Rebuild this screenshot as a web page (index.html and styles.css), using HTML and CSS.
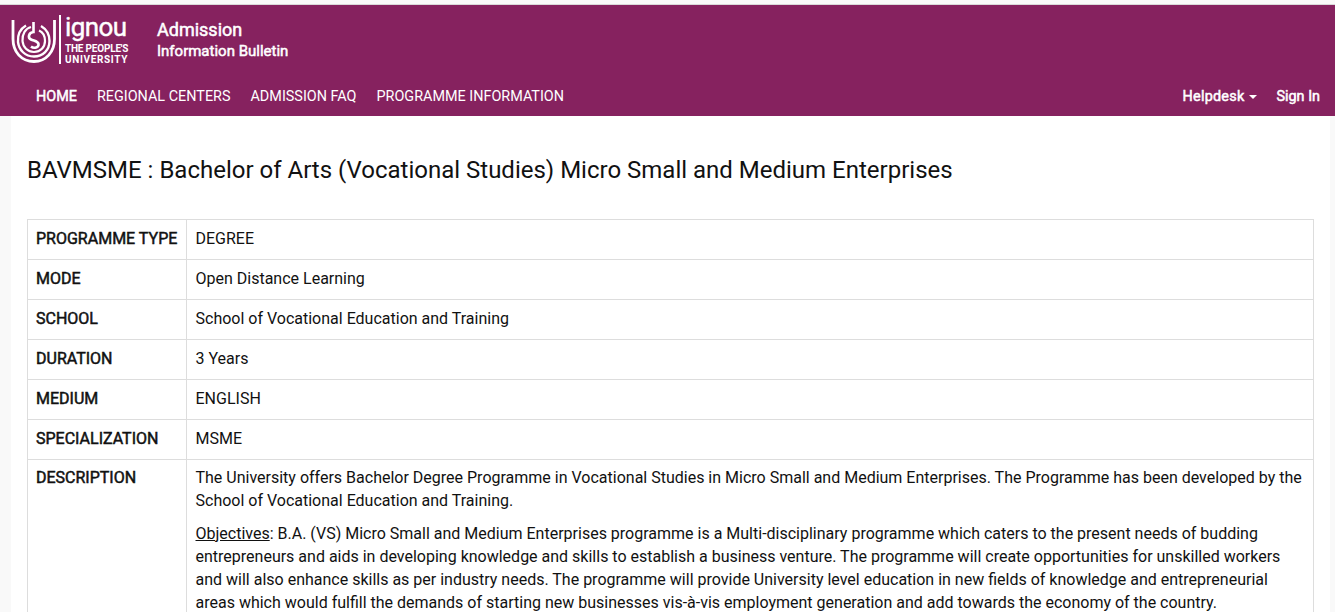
FILE: index.html
```html
<!DOCTYPE html>
<html lang="en">
<head>
<meta charset="utf-8">
<title>BAVMSME</title>
<link rel="stylesheet" href="styles.css">
</head>
<body>
<header class="site-header">
  <div class="brand-row">
    <a class="logo" href="#">
      <svg class="logo-emblem" width="46" height="46" viewBox="0 0 46 46" fill="none" stroke="#fff">
        <path d="M2 2 V21 C2 34 10.500 43.500 23 43.500 C35 43.500 43.500 34 43.500 21 V2" stroke-width="2.800"/>
        <path d="M15 7.500 C9 11 6.500 17 7 24 C8 32 14 38.500 23 38.500 C32 38.500 38.500 32 38.500 23 C38.500 16 35 11 30 8" stroke-width="2.400"/>
        <path d="M20 9 C14.500 10.500 11 16 11.500 23 C12 29 16.500 34 23 34 C29.500 34 34 29 34 23 C34 18 31.500 14 28 12.500" stroke-width="2.200"/>
        <path d="M22.500 4 V14 C17.500 14.500 16.500 20 20 21.500 C23 23 27 23 27.500 26 C28 29.500 23 31 20 28.500" stroke-width="2.600"/>
      </svg>
      <span class="logo-rule"></span>
      <span class="logo-text">
        <span class="logo-name">ignou</span>
        <span class="logo-tag logo-tag-first">THE PEOPLE'S</span>
        <span class="logo-tag logo-tag-wide">UNIVERSITY</span>
      </span>
    </a>
    <div class="site-title">
      <div class="title-main">Admission</div>
      <div class="title-sub">Information Bulletin</div>
    </div>
  </div>
  <nav class="main-nav">
    <ul class="nav-left">
      <li><a class="active" href="#">HOME</a></li>
      <li><a href="#">REGIONAL CENTERS</a></li>
      <li><a href="#">ADMISSION FAQ</a></li>
      <li><a href="#">PROGRAMME INFORMATION</a></li>
    </ul>
    <ul class="nav-right">
      <li><a class="helpdesk" href="#">Helpdesk<span class="caret"></span></a></li>
      <li><a href="#">Sign In</a></li>
    </ul>
  </nav>
</header>
<main class="card">
  <h1 class="page-title">BAVMSME : Bachelor of Arts (Vocational Studies) Micro Small and Medium Enterprises</h1>
  <table class="info-table">
    <tbody>
      <tr><th>PROGRAMME TYPE</th><td>DEGREE</td></tr>
      <tr><th>MODE</th><td>Open Distance Learning</td></tr>
      <tr><th>SCHOOL</th><td>School of Vocational Education and Training</td></tr>
      <tr><th>DURATION</th><td>3 Years</td></tr>
      <tr><th>MEDIUM</th><td>ENGLISH</td></tr>
      <tr><th>SPECIALIZATION</th><td>MSME</td></tr>
      <tr class="description-row">
        <th>DESCRIPTION</th>
        <td>
          <p>The University offers Bachelor Degree Programme in Vocational Studies in Micro Small and Medium Enterprises. The Programme has been developed by the School of Vocational Education and Training.</p>
          <p><u>Objectives</u>: B.A. (VS) Micro Small and Medium Enterprises programme is a Multi-disciplinary programme which caters to the present needs of budding entrepreneurs and aids in developing knowledge and skills to establish a business venture. The programme will create opportunities for unskilled workers and will also enhance skills as per industry needs. The programme will provide University level education in new fields of knowledge and entrepreneurial areas which would fulfill the demands of starting new businesses vis-à-vis employment generation and add towards the economy of the country.</p>
        </td>
      </tr>
    </tbody>
  </table>
</main>
</body>
</html>
```
FILE: styles.css
```css
* { box-sizing: border-box; }
html, body { margin: 0; padding: 0; }
body {
  background: #f9f9f9;
  font-family: Roboto, "Liberation Sans", sans-serif;
  font-size: 16px;
  line-height: 23px;
  color: #111;
  padding-top: 4px;
  overflow: hidden;
  height: 612px;
}
a { color: inherit; text-decoration: none; }
ul { list-style: none; margin: 0; padding: 0; }
.site-header { background: #86225f; color: #fff; border-top: 1px solid #d9d9d9; height: 112px; }
.brand-row { display: flex; align-items: flex-start; height: 70px; padding: 10px 0 0 11px; }
.logo { display: flex; width: 146px; }
.logo-emblem { margin-top: 3px; flex: none; }
.logo-rule { width: 2px; height: 49px; background: #fff; margin-left: 2px; flex: none; }
.logo-text { display: flex; flex-direction: column; margin-left: 4px; }
.logo-name { font-size: 26px; line-height: 26px; letter-spacing: -0.6px; margin-top: -1px; -webkit-text-stroke: 0.4px #fff; }
.logo-tag { font-size: 10px; line-height: 11px; font-weight: 700; letter-spacing: -0.2px; white-space: nowrap; }
.logo-tag-first { margin-top: 3px; }
.logo-tag-wide { letter-spacing: 0.65px; }
.site-title { -webkit-text-stroke: 0.5px #fff; }
.title-main { font-size: 18px; line-height: 22px; margin-top: 4px; }
.title-sub { font-size: 15px; line-height: 20px; }
.main-nav { display: flex; justify-content: space-between; padding: 0 15px 0 36px; height: 42px; align-items: center; font-size: 14.400px; }
.nav-left, .nav-right { display: flex; }
.nav-left { gap: 20px; }
.nav-right { gap: 19px; -webkit-text-stroke: 0.5px #fff; }
.helpdesk { letter-spacing: 0.25px; }
.active { -webkit-text-stroke: 0.5px #fff; }
.caret { display: inline-block; border: 4px solid transparent; border-top-color: #fff; border-bottom: 0; margin-left: 5px; vertical-align: middle; }
.card { background: #fff; margin: 0 5px 0 11px; padding: 39px 16px 0; }
.page-title { font-size: 24px; line-height: 30px; font-weight: 400; margin: 0 0 34px; }
.info-table { width: 100%; border-collapse: collapse; border: 1px solid #ddd; }
.info-table th, .info-table td { border: 1px solid #ddd; padding: 7px 8px 9px; vertical-align: top; text-align: left; }
.info-table td { padding-left: 8.500px; }
.info-table th { font-weight: 400; -webkit-text-stroke: 0.5px #111; white-space: nowrap; width: 159px; }
.info-table .description-row th, .info-table .description-row td { padding-top: 6px; }
.info-table p { margin: 0 0 10px; }
```
